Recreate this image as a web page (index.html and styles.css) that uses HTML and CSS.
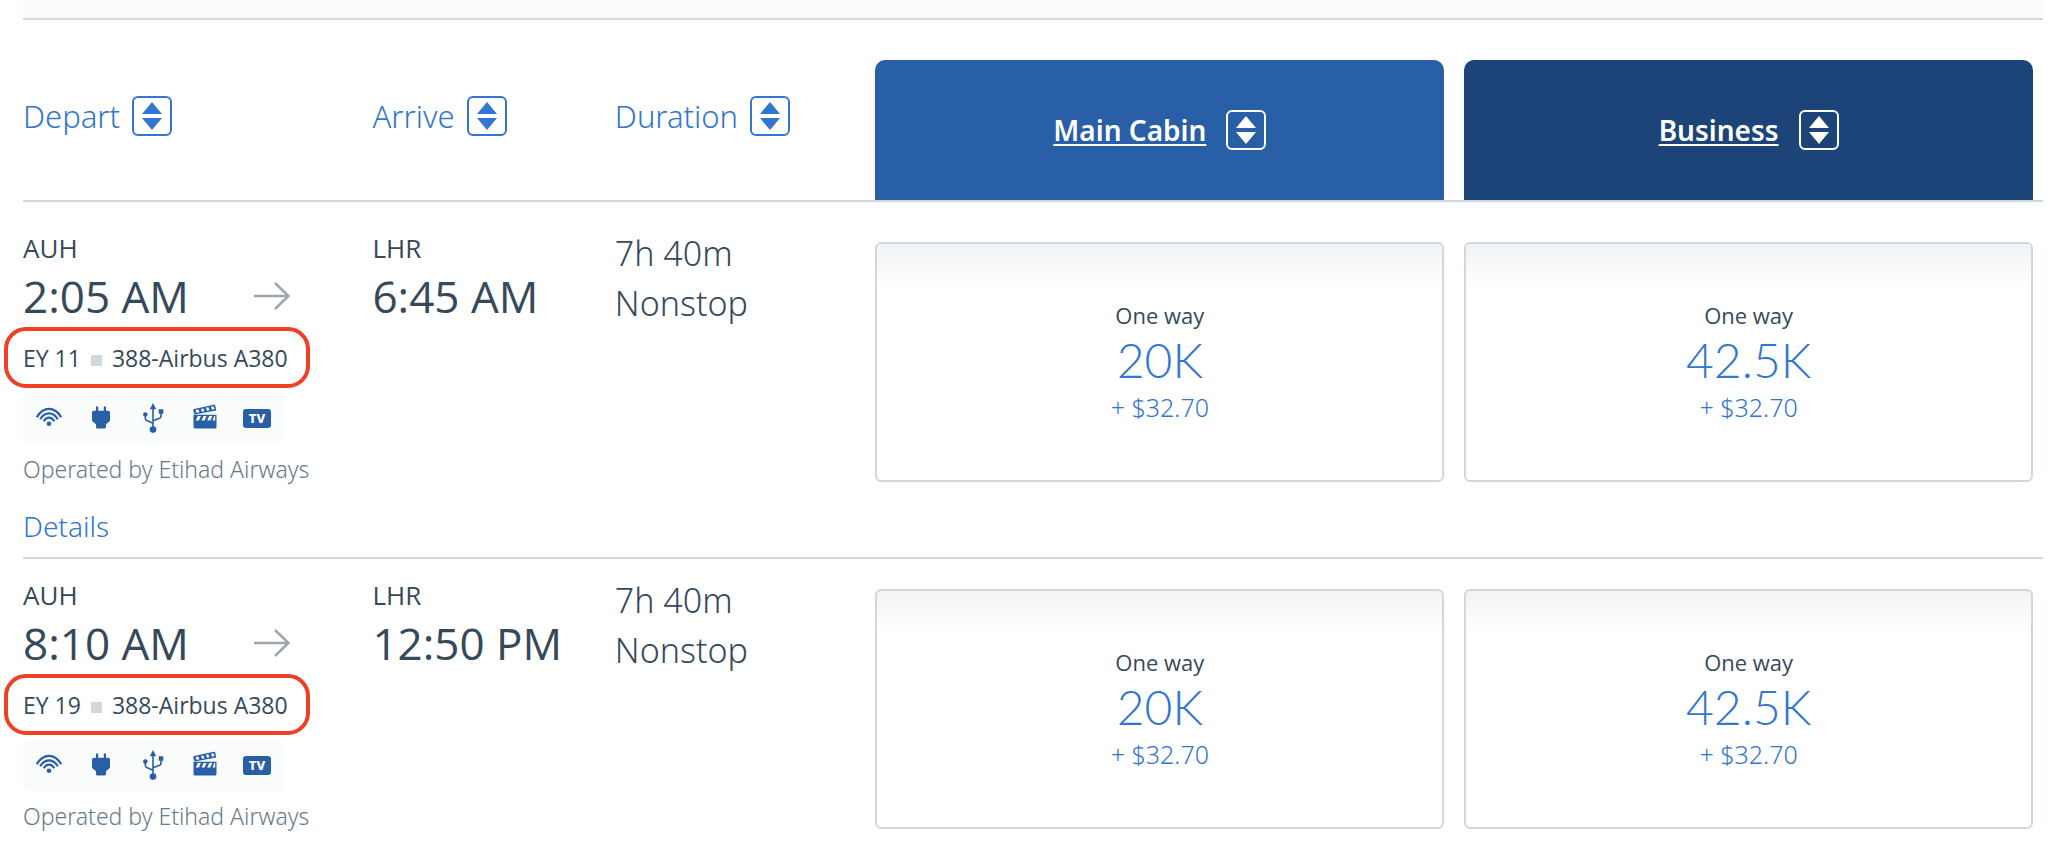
FILE: index.html
```
<!DOCTYPE html>
<html lang="en">
<head>
<meta charset="UTF-8">
<meta name="viewport" content="width=device-width, initial-scale=1">
<title>Choose flights</title>
<link rel="stylesheet" href="styles.css">
</head>
<body>

<!-- icons used in the rows -->
<svg class="sprite" aria-hidden="true">
	<symbol id="sort" viewBox="0 0 20 28">
		<path d="M10 0L20 12H0zM0 16H20L10 28z"/>
	</symbol>
	<symbol id="arrow" viewBox="0 0 36 28">
		<path d="M0 14H34M21 1L34.500 14L21 27" fill="none" stroke="currentColor" stroke-width="2.600"/>
	</symbol>
	<symbol id="wifi" viewBox="0 0 32 32">
		<g fill="none" stroke="currentColor" stroke-width="2.200">
			<path d="M3.800 15.200C10.500 4.200 21.500 4.200 28.200 15.200"/>
			<path d="M7.200 17.200C12 9.300 20 9.300 24.800 17.200"/>
			<path d="M10.700 19.200C13.500 14.300 18.500 14.300 21.300 19.200"/>
		</g>
		<circle cx="16" cy="21.800" r="2.300"/>
	</symbol>
	<symbol id="plug" viewBox="0 0 32 32">
		<path d="M11 4.500h2.200v4.300h5.600V4.500H21v4.300h2.200q1.800 0 1.800 1.800v7.400q0 1-.7 1.600L21 22.300V25q0 1.500-1.500 1.500h-7q-1.500 0-1.500-1.500V22.300L7.700 19.600Q7 19 7 18v-7.400q0-1.800 1.800-1.800H11z"/>
	</symbol>
	<symbol id="usb" viewBox="0 0 32 32">
		<path d="M16 1l3.200 6.200h-6.400zM21.700 7.200h4.600v4.600h-4.600z"/>
		<circle cx="8.300" cy="12.500" r="2.300"/>
		<circle cx="16" cy="27.600" r="3.300"/>
		<path d="M16 5V26M8.300 13v3.300q0 1.600 1.400 2.200L16 21.300M24 10v4.200q0 1.400-1.400 2L16 18.800" fill="none" stroke="currentColor" stroke-width="1.600"/>
	</symbol>
	<symbol id="movie" viewBox="0 0 32 32">
		<path fill-rule="evenodd" d="M4.500 12.800H27.500V25q0 1.500-1.500 1.500h-20Q4.500 26.500 4.500 25V12.800zM8.800 14.100L6.800 18.400H9.900L11.900 14.100zM14.500 14.100L12.500 18.400H15.600L17.600 14.100zM20.200 14.100L18.200 18.400H21.300L23.300 14.100zM25.200 14.100L23.600 18.400H26.200V14.100z"/>
		<path fill-rule="evenodd" d="M5 7L24.800 2.700Q26 2.500 26.300 3.600L27.200 8.400L5.600 12.600L4.200 8.500Q4 7.300 5 7zM6.600 8.100L7.600 10.900L10.400 10.300L9.400 7.500zM12 6.900L13 9.800L15.400 9.300L14.400 6.400zM17 5.800L18 8.700L20.400 8.200L19.400 5.300zM22 4.700L23 7.700L25.500 7.100L24.600 4.200z"/>
	</symbol>
</svg>

<div class="results">
	<div class="results-top"></div>
	<table class="flights">
		<colgroup>
			<col class="col-depart">
			<col class="col-arrive">
			<col class="col-duration">
			<col class="col-main">
			<col class="col-business">
		</colgroup>
		<thead>
			<tr>
				<th scope="col"><button type="button" class="sort">Depart <span class="sort-box"><svg><use href="#sort"/></svg></span></button></th>
				<th scope="col"><button type="button" class="sort">Arrive <span class="sort-box"><svg><use href="#sort"/></svg></span></button></th>
				<th scope="col"><button type="button" class="sort">Duration <span class="sort-box"><svg><use href="#sort"/></svg></span></button></th>
				<th scope="col" class="fare main">
					<div class="cabin"><a href="#main">Main Cabin</a><button type="button" class="sort-box" aria-label="Sort by Main Cabin"><svg><use href="#sort"/></svg></button></div>
				</th>
				<th scope="col" class="fare">
					<div class="cabin business"><a href="#business">Business</a><button type="button" class="sort-box" aria-label="Sort by Business"><svg><use href="#sort"/></svg></button></div>
				</th>
			</tr>
		</thead>
		<tbody>
			<tr>
				<td>
					<div class="airport">AUH</div>
					<div class="time">2:05 AM <svg class="arrow"><use href="#arrow"/></svg></div>
					<div class="flight"><span>EY 11</span><i></i><span>388-Airbus A380</span></div>
					<div class="amenities">
						<svg><use href="#wifi"/></svg>
						<svg><use href="#plug"/></svg>
						<svg><use href="#usb"/></svg>
						<svg><use href="#movie"/></svg>
						<span class="tv">TV</span>
					</div>
					<div class="operated">Operated by Etihad Airways</div>
					<a class="details" href="#details">Details</a>
				</td>
				<td>
					<div class="airport">LHR</div>
					<div class="time">6:45 AM</div>
				</td>
				<td class="duration">7h 40m<br>Nonstop</td>
				<td class="fare main">
					<button type="button" class="price"><span class="way">One way</span><span class="miles">20K</span><span class="tax">+ $32.70</span></button>
				</td>
				<td class="fare">
					<button type="button" class="price"><span class="way">One way</span><span class="miles">42.5K</span><span class="tax">+ $32.70</span></button>
				</td>
			</tr>
			<tr>
				<td>
					<div class="airport">AUH</div>
					<div class="time">8:10 AM <svg class="arrow"><use href="#arrow"/></svg></div>
					<div class="flight"><span>EY 19</span><i></i><span>388-Airbus A380</span></div>
					<div class="amenities">
						<svg><use href="#wifi"/></svg>
						<svg><use href="#plug"/></svg>
						<svg><use href="#usb"/></svg>
						<svg><use href="#movie"/></svg>
						<span class="tv">TV</span>
					</div>
					<div class="operated">Operated by Etihad Airways</div>
				</td>
				<td>
					<div class="airport">LHR</div>
					<div class="time">12:50 PM</div>
				</td>
				<td class="duration">7h 40m<br>Nonstop</td>
				<td class="fare main">
					<button type="button" class="price"><span class="way">One way</span><span class="miles">20K</span><span class="tax">+ $32.70</span></button>
				</td>
				<td class="fare">
					<button type="button" class="price"><span class="way">One way</span><span class="miles">42.5K</span><span class="tax">+ $32.70</span></button>
				</td>
			</tr>
		</tbody>
	</table>
</div>

</body>
</html>
```
FILE: styles.css
```
*,*:after{box-sizing:border-box;}
body{margin:0;color:#36495a;background:#fff;font:300 23px/32px "Noto Sans","Open Sans",sans-serif;}
a{color:#3176cf;text-decoration:none;}
button{margin:0;padding:0;border:0;background:none;color:inherit;font:inherit;cursor:pointer;}
svg{fill:currentColor;}
.sprite{display:none;}

.results{margin:0 23px;}
.results-top{height:20px;background:#fafcfb;border-bottom:2px solid #d0d8df;}

.flights{width:100%;table-layout:fixed;border-collapse:separate;border-spacing:0;}
.col-depart{width:17.3%;}
.col-arrive{width:12%;}
.col-duration{width:12.9%;}
.col-main{width:29.15%;}
.flights th,.flights td{padding:0;text-align:left;vertical-align:top;font-weight:inherit;}
.flights th{padding-top:76px;border-bottom:2px solid #d0d8df;}
.flights td{padding-top:16px;padding-bottom:11px;border-bottom:2px solid #d0d8df;}
.flights tr:first-child td{padding-top:26px;}
.flights tr:last-child td{border-bottom:0;}
.flights th.fare{padding:40px 10px 0 0;}
.flights td.fare{padding:30px 10px 0 0;}
.flights tr:first-child td.fare{padding-top:40px;}
.flights .fare.main{padding-right:20px;}

/* header */
.sort{display:flex;align-items:center;gap:12px;color:#3176cf;font-size:31px;line-height:40px;}
.sort-box{display:flex;align-items:center;justify-content:center;width:40px;height:40px;border:2px solid;border-radius:6px;}
.sort-box svg{width:20px;height:28px;}
.cabin{display:flex;align-items:center;justify-content:center;gap:20px;height:140px;border-radius:10px 10px 0 0;background:#285fa7;color:#fff;}
.cabin.business{background:#1c4479;}
.cabin a{color:#fff;font-size:28px;line-height:40px;font-weight:600;text-decoration:underline;text-decoration-thickness:2px;text-underline-offset:3px;text-decoration-skip-ink:none;}

/* flight */
.airport,.time,.flight,.way{font-family:"Open Sans","Noto Sans",sans-serif;font-weight:400;}
.airport{font-size:26px;line-height:40px;}
.time{display:flex;align-items:center;justify-content:space-between;max-width:267px;font-size:44px;line-height:56px;}
.arrow{width:36px;height:28px;color:#9da6ab;}
.flight{position:relative;display:flex;align-items:center;gap:10px;width:306px;margin-top:5px;font-size:23px;line-height:58px;}
.flight i{width:11px;height:11px;margin-top:5px;background:#d0d8df;}
.flight:after{content:"";position:absolute;top:-2px;left:-19px;width:100%;height:61px;border:4px solid #ee4026;border-radius:22px;}
.amenities{display:flex;align-items:center;gap:20px;width:260px;height:52px;margin-top:5px;padding:0 10px;border-radius:6px;background:#fafcfb;color:#285fa7;}
.amenities svg{width:32px;height:32px;}
.tv{flex:1;margin:0 2px;border-radius:3px;background:#285fa7;color:#fff;font-size:13px;line-height:19px;font-weight:800;text-align:center;}
.operated{color:#677a89;line-height:50px;}
.details{display:block;margin-top:12px;font-size:28px;line-height:40px;}
.duration{font-size:34px;line-height:50px;}

/* fares */
.price{display:flex;flex-direction:column;align-items:center;width:100%;padding:55px 0;border:2px solid #d0d8df;border-radius:6px;background:linear-gradient(#f1f3f5,#fff 44px);}
.way{font-size:22px;}
.miles{color:#3176cf;font-family:Lato,"Open Sans",sans-serif;font-size:48px;line-height:58px;}
.tax{color:#3176cf;font-size:25px;line-height:36px;}
```
